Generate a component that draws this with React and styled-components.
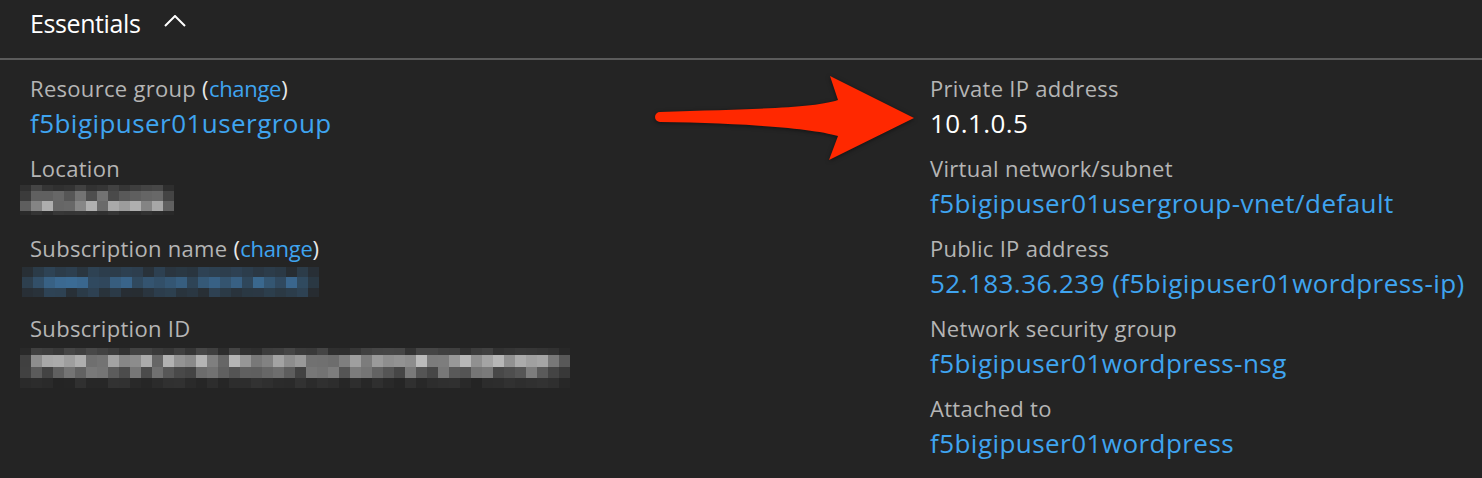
import React from 'react'
import styled, { createGlobalStyle } from 'styled-components'

const GlobalStyle = createGlobalStyle`
  html, body {
    margin: 0;
    padding: 0;
    background: #242424;
  }
  body {
    font-family: "Open Sans", "Noto Sans", sans-serif;
  }
`

const Page = styled.div`
  position: relative;
  width: 1482px;
  height: 478px;
  background: #242424;
  overflow: hidden;
`

const Header = styled.div`
  height: 58px;
  display: flex;
  align-items: flex-start;
  padding-left: 30px;
  border-bottom: 2px solid #5b5b5b;
`

const Title = styled.span`
  color: #fff;
  font-size: 25px;
  line-height: 34px;
  margin-top: 6px;
  letter-spacing: -0.4px;
`

const Chevron = styled.svg`
  margin-left: 24px;
  margin-top: 15px;
`

const Columns = styled.div`
  display: grid;
  grid-template-columns: 900px 1fr;
  padding: 12px 0 0 30px;
`

const Column = styled.div`
  display: flex;
  flex-direction: column;
  row-gap: 11px;
`

const Item = styled.div`
  display: flex;
  flex-direction: column;
`

const Label = styled.div`
  color: #b5b5b5;
  font-size: 22px;
  line-height: 33px;
  height: 33px;
  letter-spacing: 0.3px;
  white-space: nowrap;
`

const Paren = styled.span`
  color: #e8e8e8;
`

const Small = styled.a`
  color: #3fa4f0;
  text-decoration: none;
  letter-spacing: -0.3px;
`

const Value = styled.div`
  color: ${p => (p.$plain ? '#ffffff' : '#3fa4f0')};
  font-size: 26px;
  line-height: 36px;
  height: 36px;
  letter-spacing: 0.45px;
  white-space: nowrap;
`

const MosaicSlot = styled.div`
  height: 36px;
  margin-left: ${p => p.$dx}px;
  padding-top: ${p => p.$dy}px;
  box-sizing: border-box;
`

const ArrowSvg = styled.svg`
  position: absolute;
  left: 640px;
  top: 60px;
  filter: drop-shadow(0 1px 2px rgba(0, 0, 0, 0.5));
`

function rand(seed) {
  let s = seed
  return () => {
    s = (s * 9301 + 49297) % 233280
    return s / 233280
  }
}

const mix = (a, b, t) => Math.round(a + (b - a) * t)

const Mosaic = ({ width, rows, cellWidth = 11, tint, seed }) => {
  const r = rand(seed)
  const bg = [36, 36, 36]
  const cols = Math.ceil(width / cellWidth)
  const height = rows.reduce((acc, row) => acc + row.h, 0)
  const rects = []
  let y = 0
  rows.forEach((row, ri) => {
    for (let c = 0; c < cols; c++) {
      let t = row.lo + (row.hi - row.lo) * r()
      if (c === 0 || c === cols - 1) t *= 0.45
      const col = `rgb(${mix(bg[0], tint[0], t)},${mix(bg[1], tint[1], t)},${mix(bg[2], tint[2], t)})`
      rects.push(
        <rect key={`${ri}-${c}`} x={c * cellWidth} y={y} width={cellWidth} height={row.h} fill={col} />
      )
    }
    y += row.h
  })
  return (
    <svg width={cols * cellWidth} height={height} shapeRendering="crispEdges">
      {rects}
    </svg>
  )
}

const Field = ({ label, change, children }) => (
  <Item>
    <Label>
      {label}
      {change && (
        <>
          {' '}
          <Paren>(</Paren>
          <Small href="#">change</Small>
          <Paren>)</Paren>
        </>
      )}
    </Label>
    {children}
  </Item>
)

const grey = [215, 215, 215]
const blue = [70, 140, 200]

export default function App() {
  return (
    <Page>
      <GlobalStyle />
      <Header>
        <Title>Essentials</Title>
        <Chevron width="22" height="12" viewBox="0 0 22 12">
          <polyline points="1,11 11,1 21,11" fill="none" stroke="#fff" strokeWidth="2" />
        </Chevron>
      </Header>

      <Columns>
        <Column>
          <Field label="Resource group" change>
            <Value>f5bigipuser01usergroup</Value>
          </Field>
          <Field label="Location">
            <MosaicSlot $dx={-10} $dy={0}>
              <Mosaic
                width={145}
                seed={11}
                tint={grey}
                rows={[
                  { h: 6, lo: 0.05, hi: 0.2 },
                  { h: 10, lo: 0.2, hi: 0.5 },
                  { h: 10, lo: 0.35, hi: 0.85 },
                  { h: 4, lo: 0.02, hi: 0.12 },
                ]}
              />
            </MosaicSlot>
          </Field>
          <Field label="Subscription name" change>
            <MosaicSlot $dx={-8} $dy={2}>
              <Mosaic
                width={294}
                seed={37}
                tint={blue}
                rows={[
                  { h: 10, lo: 0.08, hi: 0.3 },
                  { h: 11, lo: 0.3, hi: 0.7 },
                  { h: 9, lo: 0.08, hi: 0.3 },
                ]}
              />
            </MosaicSlot>
          </Field>
          <Field label="Subscription ID">
            <MosaicSlot $dx={-10} $dy={3}>
              <Mosaic
                width={550}
                seed={73}
                tint={grey}
                rows={[
                  { h: 7, lo: 0.04, hi: 0.2 },
                  { h: 12, lo: 0.35, hi: 0.85 },
                  { h: 11, lo: 0.15, hi: 0.5 },
                  { h: 10, lo: 0.0, hi: 0.08 },
                ]}
              />
            </MosaicSlot>
          </Field>
        </Column>

        <Column>
          <Field label="Private IP address">
            <Value $plain>10.1.0.5</Value>
          </Field>
          <Field label="Virtual network/subnet">
            <Value>f5bigipuser01usergroup-vnet/default</Value>
          </Field>
          <Field label="Public IP address">
            <Value>52.183.36.239 (f5bigipuser01wordpress-ip)</Value>
          </Field>
          <Field label="Network security group">
            <Value>f5bigipuser01wordpress-nsg</Value>
          </Field>
          <Field label="Attached to">
            <Value>f5bigipuser01wordpress</Value>
          </Field>
        </Column>
      </Columns>

      <ArrowSvg width="290" height="120" viewBox="0 0 290 120">
        <path
          d="M 20 52 C 100 49, 172 49, 198 40 L 190 16 L 274 58 L 189 100 L 198 76 C 172 68, 100 63, 20 62 A 5 5 0 0 1 20 52 Z"
          fill="#ff2800"
        />
      </ArrowSvg>
    </Page>
  )
}
